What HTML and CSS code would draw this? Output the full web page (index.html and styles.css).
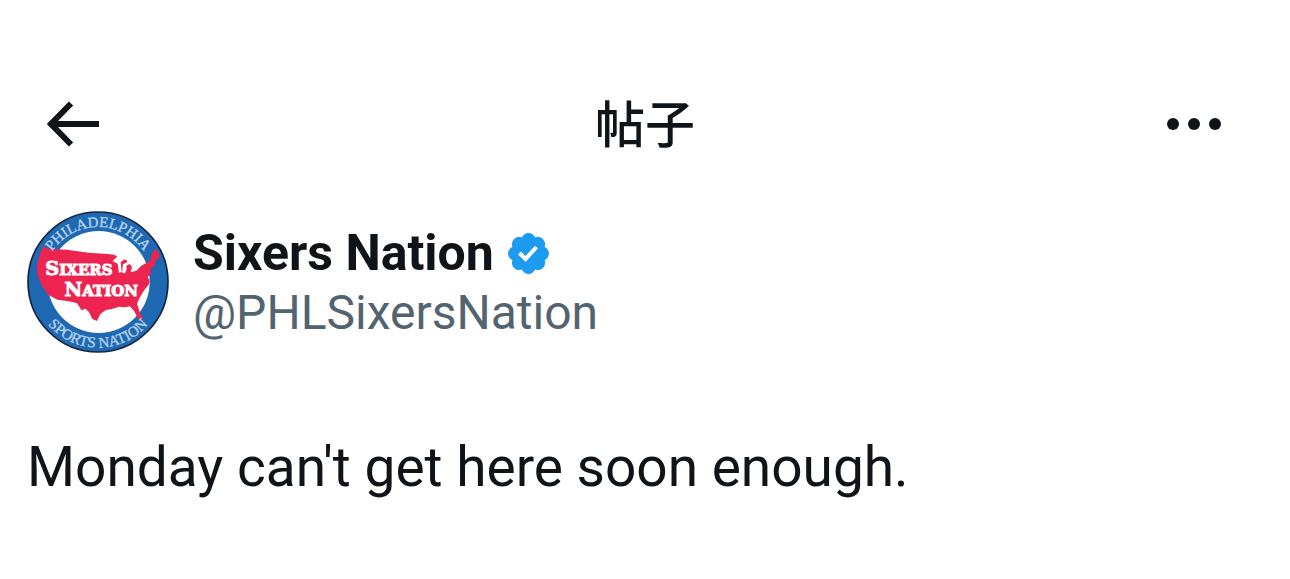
FILE: index.html
```html
<!DOCTYPE html>
<html lang="zh-CN">
<head>
    <meta charset="UTF-8">
    <meta name="viewport" content="width=device-width, initial-scale=1.0">
    <title>帖子</title>
    <link rel="stylesheet" href="styles.css">
</head>
<body>
    <header class="top-bar">
        <button class="icon-button" type="button" aria-label="返回">
            <svg width="54" height="46" viewBox="0 0 54 46" fill="none" stroke="currentColor" stroke-width="6">
                <path d="M53 23H5M25 2.500L5 23L25 43.500"/>
            </svg>
        </button>
        <h1 class="top-title">帖子</h1>
        <button class="icon-button more-button" type="button" aria-label="更多">
            <svg width="54" height="12" viewBox="0 0 54 12" fill="currentColor">
                <circle cx="6" cy="6" r="6"/>
                <circle cx="27" cy="6" r="6"/>
                <circle cx="48" cy="6" r="6"/>
            </svg>
        </button>
    </header>

    <main>
        <article class="post">
            <div class="author">
                <svg class="avatar" viewBox="20 20 426 426" role="img" aria-label="Sixers Nation">
                    <defs>
                        <path id="ring-top" d="M68 233A165 165 0 0 1 398 233"/>
                        <path id="ring-bottom" d="M36 233A197 197 0 0 0 430 233"/>
                    </defs>
                    <circle cx="233" cy="233" r="210" fill="#1f68b2" stroke="#16243c" stroke-width="5"/>
                    <circle cx="235" cy="233" r="153" fill="#fff"/>
                    <path fill="#ee2450" d="M68 125L80 133L140 136L205 145L262 149L282 151L291 157L278 168L302 164L318 167L321 173L308 180L305 205L314 207L319 194L318 184L328 179L335 187L331 204L348 199L363 184L376 177L389 169L396 145L404 134L414 142L418 158L406 169L402 186L391 193L393 207L382 218L388 229L385 241L372 257L359 278L350 298L359 325L367 341L362 350L352 341L341 319L328 306L313 309L296 307L275 314L257 317L240 329L230 350L216 344L207 325L196 313L184 318L170 297L146 291L111 286L83 271L66 246L53 219L49 187L55 161Z"/>
                    <path fill="#fff" d="M276 170L302 160L310 166L301 174L304 203L296 205L292 178Z"/>
                    <g class="ring-text">
                        <text><textPath href="#ring-top" startOffset="50%">PHILADELPHIA</textPath></text>
                        <text><textPath href="#ring-bottom" startOffset="50%">SPORTS NATION</textPath></text>
                    </g>
                    <g class="map-text">
                        <text x="176" y="213"><tspan class="cap">S</tspan>IXERS</text>
                        <text x="243" y="275"><tspan class="cap">N</tspan>ATION</text>
                    </g>
                </svg>
                <div class="names">
                    <div class="name-row">
                        <a class="name" href="#">Sixers Nation</a>
                        <svg class="badge" viewBox="1.600 1.600 18.800 18.800" role="img" aria-label="认证账号">
                            <path fill="currentColor" d="M20.396 11c-.018-.646-.215-1.275-.57-1.816-.354-.54-.852-.972-1.438-1.246.223-.607.27-1.264.14-1.897-.131-.634-.437-1.218-.882-1.687-.47-.445-1.053-.75-1.687-.882-.633-.13-1.290-.083-1.897.14-.273-.587-.704-1.086-1.245-1.440S11.647 1.620 11 1.604c-.646.017-1.273.213-1.813.568s-.969.854-1.240 1.440c-.608-.223-1.267-.272-1.902-.14-.635.13-1.220.436-1.690.882-.445.47-.749 1.055-.878 1.688-.13.633-.08 1.290.144 1.896-.587.274-1.087.705-1.443 1.245-.356.54-.555 1.170-.574 1.817.02.647.218 1.276.574 1.817.356.54.856.972 1.443 1.245-.224.606-.274 1.263-.144 1.896.13.634.433 1.218.877 1.688.47.443 1.054.747 1.687.878.633.132 1.290.084 1.897-.136.274.586.705 1.084 1.246 1.439.54.354 1.170.551 1.816.569.647-.016 1.276-.213 1.817-.567s.972-.854 1.245-1.440c.604.239 1.266.296 1.903.164.636-.132 1.220-.447 1.680-.907.46-.46.776-1.044.908-1.681s.075-1.299-.165-1.903c.586-.274 1.084-.705 1.439-1.246.354-.54.551-1.170.569-1.816z"/>
                            <path fill="#fff" d="M9.662 14.850l-3.429-3.428 1.293-1.302 2.072 2.072 4.400-4.794 1.347 1.246z"/>
                        </svg>
                    </div>
                    <a class="handle" href="#">@PHLSixersNation</a>
                </div>
            </div>
            <p class="post-text" lang="en">Monday can't get here soon enough.</p>
        </article>
    </main>
</body>
</html>
```
FILE: styles.css
```css
* {
    box-sizing: border-box;
}

body {
    margin: 0;
    background-color: #ffffff;
    color: #0f1419;
    font-family: Roboto, 'Noto Sans CJK SC', sans-serif;
}

/* top bar */
.top-bar {
    display: grid;
    grid-template-columns: 1fr auto 1fr;
    align-items: center;
    padding: 88px 46px 0;
}

.top-title {
    margin: 0;
    padding-bottom: 6px;
    font-family: 'Noto Sans CJK SC', sans-serif;
    font-size: 50px;
    font-weight: 500;
    line-height: 66px;
}

.icon-button {
    display: flex;
    justify-self: start;
    padding: 0;
    border: 0;
    background: none;
    color: inherit;
    cursor: pointer;
}

.more-button {
    justify-self: end;
    padding-right: 23px;
}

/* post */
.post {
    padding: 51px 27px 0;
}

.author {
    display: flex;
    align-items: center;
    gap: 24px;
}

.avatar {
    flex: none;
    width: 142px;
    height: 142px;
}

.ring-text {
    fill: #b4d2ee;
    stroke: #b4d2ee;
    stroke-width: 1;
    font-family: 'Liberation Serif', serif;
    font-size: 45px;
    text-anchor: middle;
}

.map-text {
    fill: #ffffff;
    stroke: #ffffff;
    stroke-width: 3;
    font-family: 'DejaVu Serif', serif;
    font-size: 45px;
    font-weight: 700;
    text-anchor: middle;
}

.map-text .cap {
    font-size: 58px;
}

.names {
    padding-top: 2px;
}

.name-row {
    display: flex;
    align-items: center;
    gap: 14px;
}

.name,
.handle {
    display: block;
    line-height: 60px;
    text-decoration: none;
}

.name {
    color: #0f1419;
    font-size: 50px;
    font-weight: 700;
}

.handle {
    color: #536471;
    font-size: 48px;
}

.badge {
    width: 41px;
    height: 41px;
    color: #1d9bf0;
}

.post-text {
    margin: 76px 0 0;
    font-size: 55px;
    line-height: 76px;
}
```
